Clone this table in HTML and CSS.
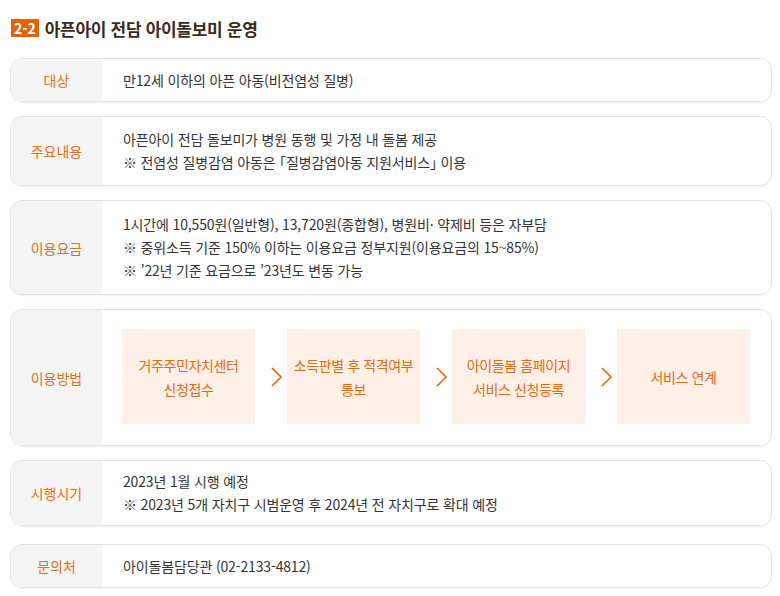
FILE: index.html
```html
<!DOCTYPE html>
<html lang="ko">
<head>
<meta charset="utf-8">
<link rel="stylesheet" href="styles.css">
</head>
<body>
<div class="page">
  <h2 class="title"><span class="badge">2-2</span>아픈아이 전담 아이돌보미 운영</h2>

  <div class="card">
    <div class="label">대상</div>
    <div class="body single"><p>만12세 이하의 아픈 아동(비전염성 질병)</p></div>
  </div>

  <div class="card">
    <div class="label">주요내용</div>
    <div class="body">
      <p>아픈아이 전담 돌보미가 병원 동행 및 가정 내 돌봄 제공</p>
      <p>※ 전염성 질병감염 아동은 ｢질병감염아동 지원서비스｣ 이용</p>
    </div>
  </div>

  <div class="card">
    <div class="label">이용요금</div>
    <div class="body triple">
      <p>1시간에 10,550원(일반형), 13,720원(종합형), 병원비· 약제비 등은 자부담</p>
      <p>※ 중위소득 기준 150% 이하는 이용요금 정부지원(이용요금의 15~85%)</p>
      <p>※ ’22년 기준 요금으로 ’23년도 변동 가능</p>
    </div>
  </div>

  <div class="card">
    <div class="label">이용방법</div>
    <div class="body steps-body">
      <div class="steps">
        <div class="step">거주주민자치센터<br>신청접수</div>
        <svg class="arrow" viewBox="0 0 11 20"><path d="M1 1 L10 10 L1 19" fill="none" stroke="#e2700f" stroke-width="1.7"/></svg>
        <div class="step">소득판별 후 적격여부<br>통보</div>
        <svg class="arrow" viewBox="0 0 11 20"><path d="M1 1 L10 10 L1 19" fill="none" stroke="#e2700f" stroke-width="1.7"/></svg>
        <div class="step">아이돌봄 홈페이지<br>서비스 신청등록</div>
        <svg class="arrow" viewBox="0 0 11 20"><path d="M1 1 L10 10 L1 19" fill="none" stroke="#e2700f" stroke-width="1.7"/></svg>
        <div class="step">서비스 연계</div>
      </div>
    </div>
  </div>

  <div class="card">
    <div class="label">시행시기</div>
    <div class="body compact">
      <p>2023년 1월 시행 예정</p>
      <p>※ 2023년 5개 자치구 시범운영 후 2024년 전 자치구로 확대 예정</p>
    </div>
  </div>

  <div class="card last">
    <div class="label">문의처</div>
    <div class="body single"><p>아이돌봄담당관 (02-2133-4812)</p></div>
  </div>
</div>
</body>
</html>
```

FILE: styles.css
```css
* { box-sizing: border-box; }
html, body { margin: 0; padding: 0; background: #fff; }
body {
  font-family: "Noto Sans CJK KR", "Noto Sans", sans-serif;
  color: #333;
  font-size: 14px;
}
.page {
  padding: 18px 8px 0 10px;
}
.title {
  margin: 0 0 20px 0;
  display: flex;
  align-items: center;
  font-size: 17px;
  font-weight: 700;
  color: #3a2a1e;
  height: 20px;
  letter-spacing: -0.3px;
}
.badge {
  display: inline-block;
  background: #dd6508;
  color: #fff;
  font-size: 14px;
  font-weight: 700;
  height: 18px;
  line-height: 18px;
  padding: 0 3px;
  margin: 0 6px 0 1px;
  letter-spacing: 0;
}
.card {
  display: flex;
  border: 1px solid #e3e3e3;
  border-radius: 12px;
  overflow: hidden;
  margin-bottom: 14px;
  box-shadow: 0 1px 2px rgba(0,0,0,0.06);
  width: 762px;
}
.card.last { margin-top: 18px; }
.label {
  width: 91px;
  flex: none;
  background: #f5f5f5;
  color: #e56d14;
  display: flex;
  align-items: center;
  justify-content: center;
  font-size: 14px;
}
.body {
  flex: 1;
  padding: 11px 0 11px 21px;
  display: flex;
  flex-direction: column;
  justify-content: center;
}
.body.single { padding: 10px 0 9px 21px; }
.body.triple { padding: 12px 0 12px 21px; }
.body.compact { padding: 9px 0 9px 21px; }
.body p {
  margin: 0;
  line-height: 23px;
  letter-spacing: -0.15px;
}
.steps-body { padding: 19px 0 21px 20px; }
.steps {
  display: flex;
  align-items: center;
}
.step {
  width: 133px;
  height: 95px;
  background: #fef0e6;
  color: #e06b12;
  display: flex;
  align-items: center;
  justify-content: center;
  text-align: center;
  line-height: 24px;
  letter-spacing: -0.4px;
}
.arrow {
  width: 11px;
  height: 20px;
  margin: 0 5px 0 16px;
  flex: none;
}
```
